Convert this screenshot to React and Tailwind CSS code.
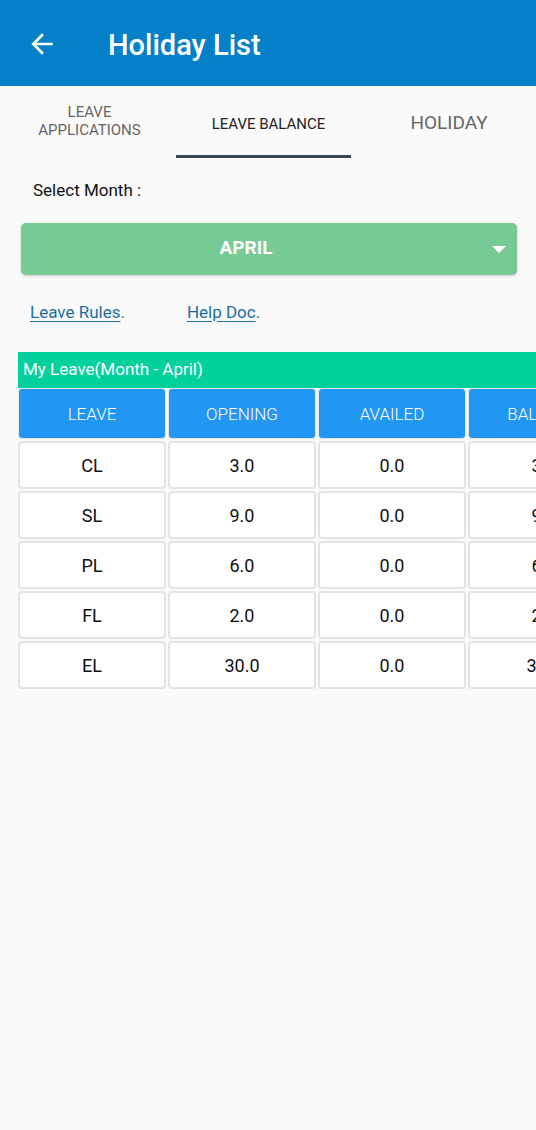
import React from 'react';

const ROWS = [
  ['CL', '3.0', '0.0', '3.0'],
  ['SL', '9.0', '0.0', '9.0'],
  ['PL', '6.0', '0.0', '6.0'],
  ['FL', '2.0', '0.0', '2.0'],
  ['EL', '30.0', '0.0', '30.0'],
];

const HEADS = ['LEAVE', 'OPENING', 'AVAILED', 'BALANCE'];

export default function App() {
  return (
    <div className="w-[536px] h-[1130px] bg-[#fafafa] overflow-hidden font-['Roboto',sans-serif]">
      {/* App bar */}
      <div className="h-[86px] bg-[#0380c8] flex items-center">
        <svg className="ml-[26px] mt-[2px] w-[32px] h-[32px]" viewBox="0 0 24 24" fill="#fff">
          <path d="M20 11H7.83l5.59-5.59L12 4l-8 8 8 8 1.41-1.41L7.83 13H20v-2z" />
        </svg>
        <h1 className="ml-[50px] mt-[5px] text-[29px] font-medium text-white">Holiday List</h1>
      </div>

      {/* Tabs */}
      <div className="h-[72px] flex">
        <div className="w-[179px] flex items-center justify-center">
          <span className="text-center text-[15px] leading-[18px] text-[#666] mt-[-2px]">
            LEAVE
            <br />
            APPLICATIONS
          </span>
        </div>
        <div className="w-[179px] flex flex-col items-center justify-end">
          <span className="text-[15px] text-[#222] mb-[20px]">LEAVE BALANCE</span>
          <div className="w-[175px] h-[3px] bg-[#3b4654] ml-[-10px]" />
        </div>
        <div className="flex-1 flex items-center justify-center">
          <span className="text-[19px] text-[#666] mt-[2px] ml-[4px]">HOLIDAY</span>
        </div>
      </div>

      {/* Month select */}
      <div className="px-[21px]">
        <p className="pl-[12px] pt-[20px] text-[17px] text-[#111]">Select Month :</p>
        <div className="mt-[19px] w-[496px] h-[52px] rounded-[5px] bg-[#77c995] shadow-[0_1px_3px_rgba(0,0,0,0.2)] relative flex items-center justify-center pr-[46px]">
          <span className="text-[19px] font-bold text-white">APRIL</span>
          <div className="absolute right-[11px] top-[23px] w-0 h-0 border-l-[7px] border-r-[7px] border-t-[7px] border-l-transparent border-r-transparent border-t-white" />
        </div>
        <div className="flex mt-[25px] pl-[9px] text-[17px] text-[#1b6e9f]">
          <span><span className="underline underline-offset-[3px]">Leave Rules</span>.</span>
          <span className="ml-[62px]"><span className="underline underline-offset-[3px]">Help Doc</span>.</span>
        </div>
      </div>

      {/* Leave table */}
      <div className="ml-[18px] mt-[27px] overflow-hidden">
        <div className="h-[36px] bg-[#03d19c] flex items-center pl-[5px] text-[17px] text-white">My Leave(Month - April)</div>
        <div className="flex flex-col gap-[2px] w-[640px]">
          <div className="flex gap-[2px] h-[51px]">
            {HEADS.map((h) => (
              <div key={h} className="w-[148px] last:w-[152px] rounded-[4px] bg-[#2196f3] border border-[#e4e4e4] flex items-center justify-center pt-[3px] text-[17px] font-light text-white">
                {h}
              </div>
            ))}
          </div>
          {ROWS.map((row) => (
            <div key={row[0]} className="flex gap-[2px] h-[48px]">
              {row.map((v, i) => (
                <div key={i} className="w-[148px] last:w-[152px] rounded-[4px] bg-white border-2 border-[#e4e4e4] flex items-center justify-center pt-[1px] text-[18px] text-[#111]">
                  {v}
                </div>
              ))}
            </div>
          ))}
        </div>
      </div>
    </div>
  );
}
